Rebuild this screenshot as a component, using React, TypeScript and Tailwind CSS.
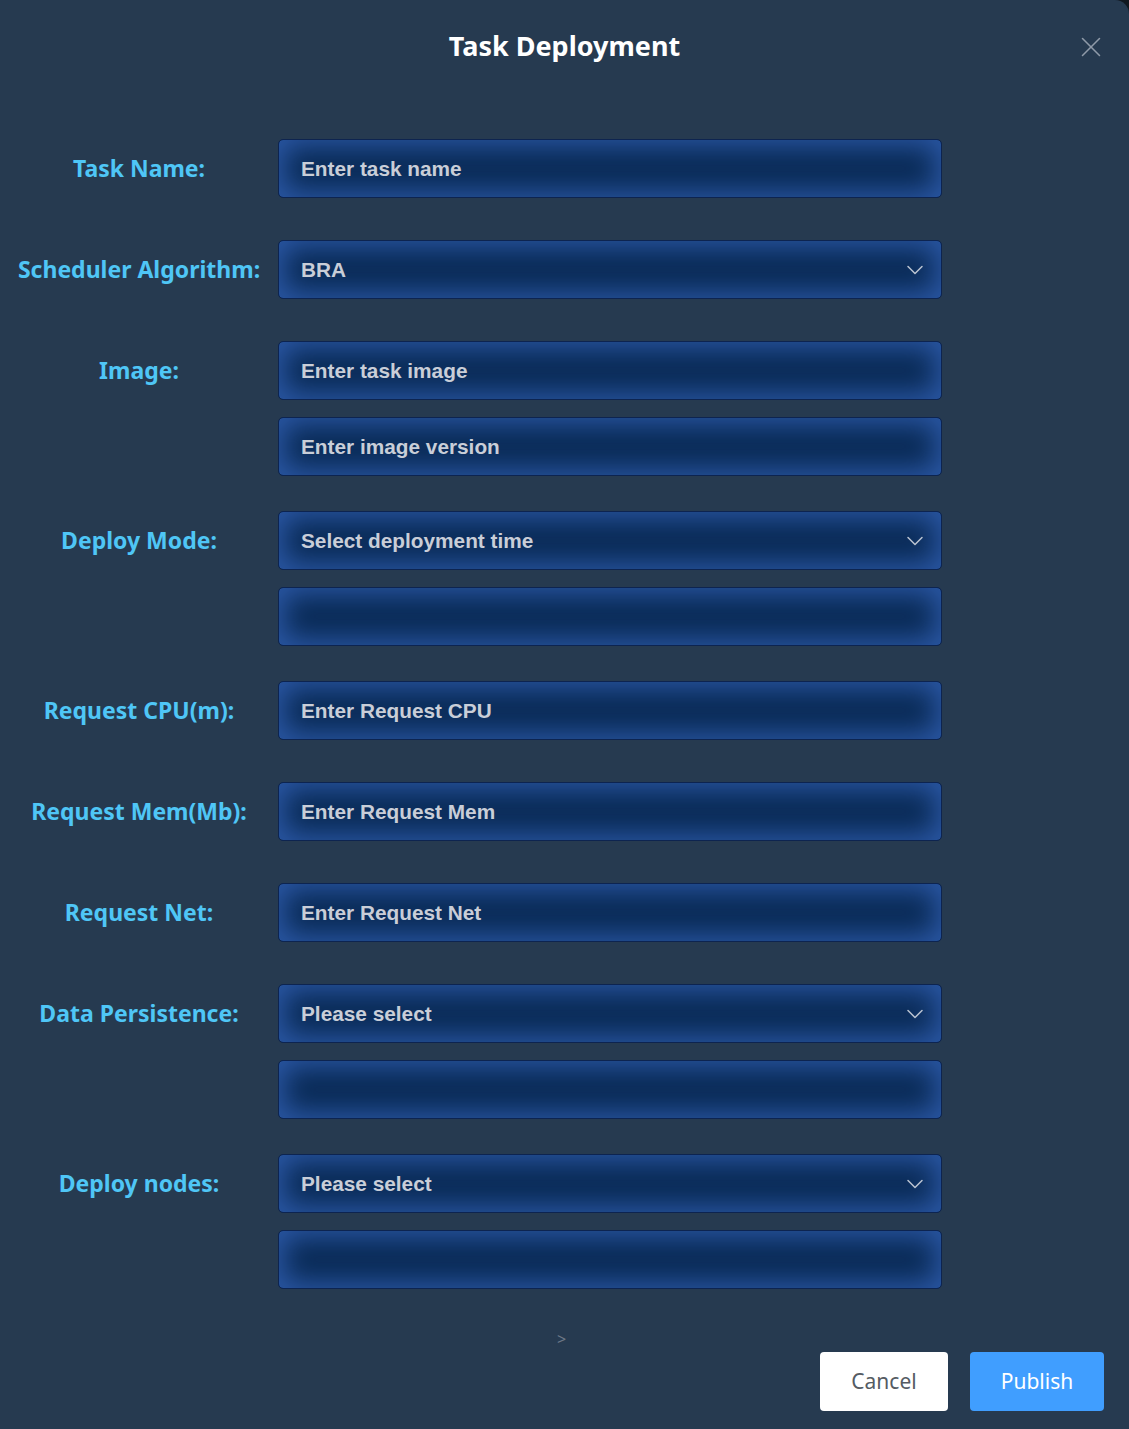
import { ChevronDown, X } from "lucide-react";

type Row = {
  label: string;
  fields: { text: string; select?: boolean }[];
};

const rows: Row[] = [
  { label: "Task Name:", fields: [{ text: "Enter task name" }] },
  { label: "Scheduler Algorithm:", fields: [{ text: "BRA", select: true }] },
  { label: "Image:", fields: [{ text: "Enter task image" }, { text: "Enter image version" }] },
  { label: "Deploy Mode:", fields: [{ text: "Select deployment time", select: true }, { text: "" }] },
  { label: "Request CPU(m):", fields: [{ text: "Enter Request CPU" }] },
  { label: "Request Mem(Mb):", fields: [{ text: "Enter Request Mem" }] },
  { label: "Request Net:", fields: [{ text: "Enter Request Net" }] },
  { label: "Data Persistence:", fields: [{ text: "Please select", select: true }, { text: "" }] },
  { label: "Deploy nodes:", fields: [{ text: "Please select", select: true }, { text: "" }] },
];

function Field({ text, select }: { text: string; select?: boolean }) {
  return (
    <div className="flex h-[59px] w-[664px] items-center justify-between rounded-[5px] border border-[#0d2450] bg-[#092a55] pl-[22px] pr-[12px] shadow-[inset_0_0_28px_6px_#2b58a6]">
      <span className="font-['Liberation_Sans',Arial,sans-serif] text-[20.8px] font-bold text-[#c9ced8]">
        {text}
      </span>
      {select && <ChevronDown className="h-[28px] w-[28px] text-[#b9c2d0]" strokeWidth={1.3} />}
    </div>
  );
}

export default function App() {
  return (
    <div className="min-h-[1429px] w-[1129px] bg-[#111820]">
      <div className="relative flex min-h-[1429px] w-[1129px] flex-col rounded-tr-[14px] bg-[#263a50] font-['Noto_Sans','Open_Sans',sans-serif]">
        <div className="flex h-[93px] items-start justify-center pt-[26px]">
          <h1 className="text-[27px] font-bold leading-[40px] text-white">Task Deployment</h1>
          <button className="absolute right-[21px] top-[30px] text-[#8f9aa8]">
            <X className="h-[34px] w-[34px]" strokeWidth={1.1} />
          </button>
        </div>

        <div className="flex flex-col pt-[46px]">
          {rows.map((row) => (
            <div
              key={row.label}
              className={`flex ${row.fields.length > 1 ? "mb-[35px]" : "mb-[42px]"}`}
            >
              <div className="flex h-[59px] w-[278px] shrink-0 items-center justify-center">
                <span className="text-[23px] font-bold text-[#4fc6f6]">{row.label}</span>
              </div>
              <div className="flex flex-col gap-[17px]">
                {row.fields.map((f, i) => (
                  <Field key={i} text={f.text} select={f.select} />
                ))}
              </div>
            </div>
          ))}
        </div>

        <div className="mt-[5px] flex justify-center pr-[6px]">
          <span className="text-[16px] leading-[20px] text-[#6d7887]">&gt;</span>
        </div>
        <div className="flex justify-end gap-[22px] pr-[25px] pt-[3px]">
          <button className="h-[59px] w-[128px] rounded-[4px] bg-white text-[21px] text-[#555b63]">
            Cancel
          </button>
          <button className="h-[59px] w-[134px] rounded-[4px] bg-[#409eff] text-[21px] text-white">
            Publish
          </button>
        </div>
      </div>
    </div>
  );
}
